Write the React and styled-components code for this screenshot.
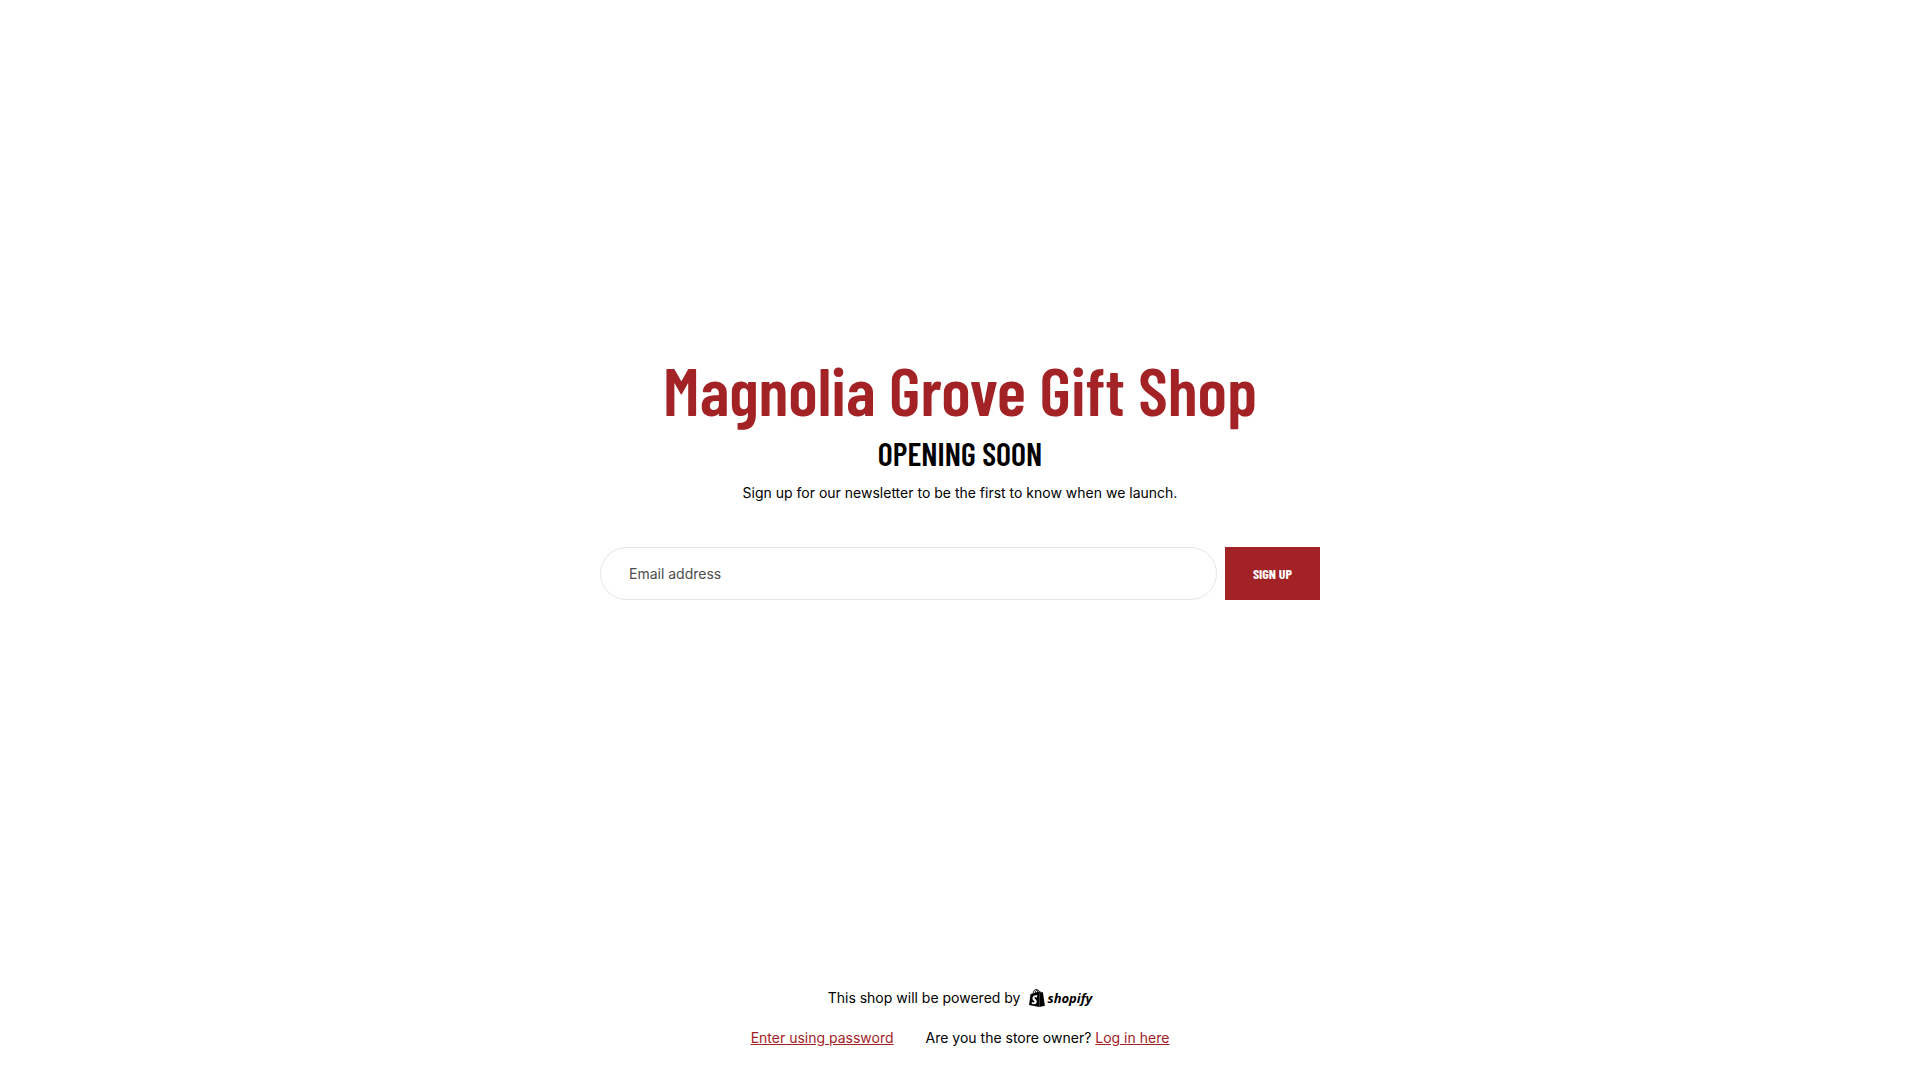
import React from 'react';
import styled, { createGlobalStyle } from 'styled-components';
import { SiShopify } from 'react-icons/si';

const GlobalStyle = createGlobalStyle`
  body {
    margin: 0;
    background: #fff;
    color: #000;
    font-family: Inter, 'Liberation Sans', sans-serif;
    font-size: 14px;
    line-height: 22px;
  }
`;

const headingFont = `'Barlow Condensed', 'Roboto Condensed', 'Liberation Sans Narrow', 'Liberation Sans', sans-serif`;

const Page = styled.div`
  min-height: 100vh;
  box-sizing: border-box;
  display: flex;
  flex-direction: column;
  align-items: center;
  padding: 0 24px 31px;
`;

const Main = styled.main`
  flex: 1;
  width: 100%;
  max-width: 720px;
  padding-bottom: 39px;
  display: flex;
  flex-direction: column;
  justify-content: center;
  text-align: center;
`;

const ShopName = styled.h1`
  margin: 0 0 4px;
  color: #a32225;
  font-family: ${headingFont};
  font-size: 68px;
  font-weight: 600;
  line-height: 80px;
`;

const Tagline = styled.h2`
  margin: 0;
  font-family: ${headingFont};
  font-size: 32px;
  font-weight: 600;
  line-height: 40px;
  text-transform: uppercase;
`;

const Intro = styled.p`
  margin: 9px 0 0;
`;

const SignupForm = styled.form`
  display: flex;
  gap: 8px;
  margin-top: 43px;
`;

const EmailInput = styled.input`
  flex: 1;
  min-width: 0;
  height: 53px;
  box-sizing: border-box;
  padding: 0 28px;
  border: 1px solid #e5e5e5;
  border-radius: 27px;
  background: #fff;
  color: #000;
  font: inherit;

  &::placeholder {
    color: #4d4d4d;
    opacity: 1;
  }
`;

const SubmitButton = styled.button`
  padding: 0 28px;
  border: 0;
  background: #a32225;
  color: #fff;
  font-family: ${headingFont};
  font-size: 14px;
  font-weight: 700;
  text-transform: uppercase;
  cursor: pointer;
`;

const Footer = styled.footer`
  display: flex;
  flex-direction: column;
  align-items: center;
  gap: 18px;
`;

const PoweredBy = styled.div`
  display: flex;
  align-items: center;
  gap: 8px;
`;

const ShopifyLink = styled.a`
  display: flex;
  align-items: center;
  gap: 1px;
  color: #000;
  font-family: 'Open Sans', sans-serif;
  font-size: 13px;
  font-style: italic;
  font-weight: 700;
  text-decoration: none;
`;

const FooterLinks = styled.div`
  display: flex;
  gap: 32px;
`;

const TextLink = styled.a`
  color: #a32225;
  text-decoration: underline;
`;

const App = () => {
  return (
    <>
      <GlobalStyle />
      <Page>
        <Main>
          <ShopName>Magnolia Grove Gift Shop</ShopName>
          <Tagline>Opening soon</Tagline>
          <Intro>Sign up for our newsletter to be the first to know when we launch.</Intro>
          <SignupForm onSubmit={(e) => e.preventDefault()}>
            <EmailInput type="email" placeholder="Email address" aria-label="Email address" />
            <SubmitButton type="submit">Sign up</SubmitButton>
          </SignupForm>
        </Main>
        <Footer>
          <PoweredBy>
            <span>This shop will be powered by</span>
            <ShopifyLink href="#shopify">
              <SiShopify size={18} aria-hidden="true" />
              shopify
            </ShopifyLink>
          </PoweredBy>
          <FooterLinks>
            <TextLink href="#password">Enter using password</TextLink>
            <span>
              Are you the store owner? <TextLink href="#login">Log in here</TextLink>
            </span>
          </FooterLinks>
        </Footer>
      </Page>
    </>
  );
};

export default App;
